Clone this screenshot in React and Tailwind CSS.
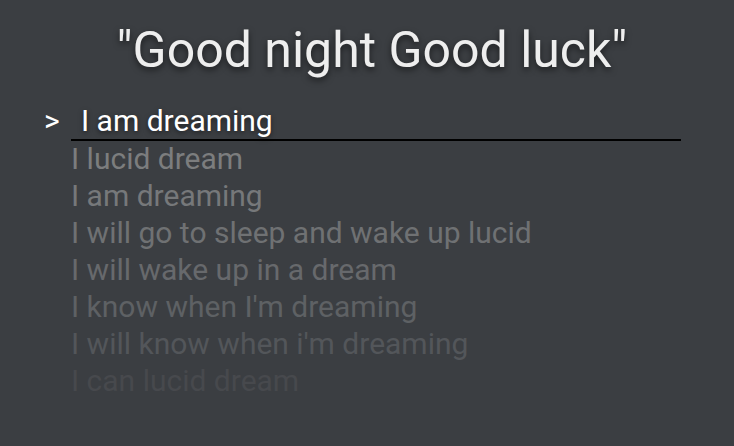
import React from 'react';

const suggestions = [
  { text: 'I lucid dream', cls: 'text-[#7c7d7e]' },
  { text: 'I am dreaming', cls: 'text-[#76787a]' },
  { text: 'I will go to sleep and wake up lucid', cls: 'text-[#6f7173]' },
  { text: 'I will wake up in a dream', cls: 'text-[#67696c]' },
  { text: "I know when I'm dreaming", cls: 'text-[#5e6164]' },
  { text: "I will know when i'm dreaming", cls: 'text-[#53565a]' },
  { text: 'I can lucid dream', cls: 'text-[#47494d]' },
];

export default function App() {
  return (
    <div className="h-[446px] w-[734px] overflow-hidden bg-[#3b3e42] font-['Roboto',sans-serif]">
      <h1 className="pl-[10px] pt-[20px] text-center text-[50px] leading-[60px] text-[#eeeeee] [text-shadow:0_3px_6px_rgba(0,0,0,0.55)]">
        "Good night Good luck"
      </h1>
      <div className="mt-[24px] flex items-baseline pl-[44px]">
        <span className="w-[27px] text-[30px] leading-[33px] text-white">&gt;</span>
        <div className="w-[610px] border-b-2 border-black pb-[2px] pl-[10px] text-[30px] leading-[33px] text-white [text-shadow:0_2px_5px_rgba(0,0,0,0.5)]">
          I am dreaming
        </div>
      </div>
      <ul className="-mt-[1px] pl-[71px]">
        {suggestions.map(s => (
          <li key={s.text} className={`text-[30px] leading-[37px] ${s.cls}`}>
            {s.text}
          </li>
        ))}
      </ul>
    </div>
  );
}
